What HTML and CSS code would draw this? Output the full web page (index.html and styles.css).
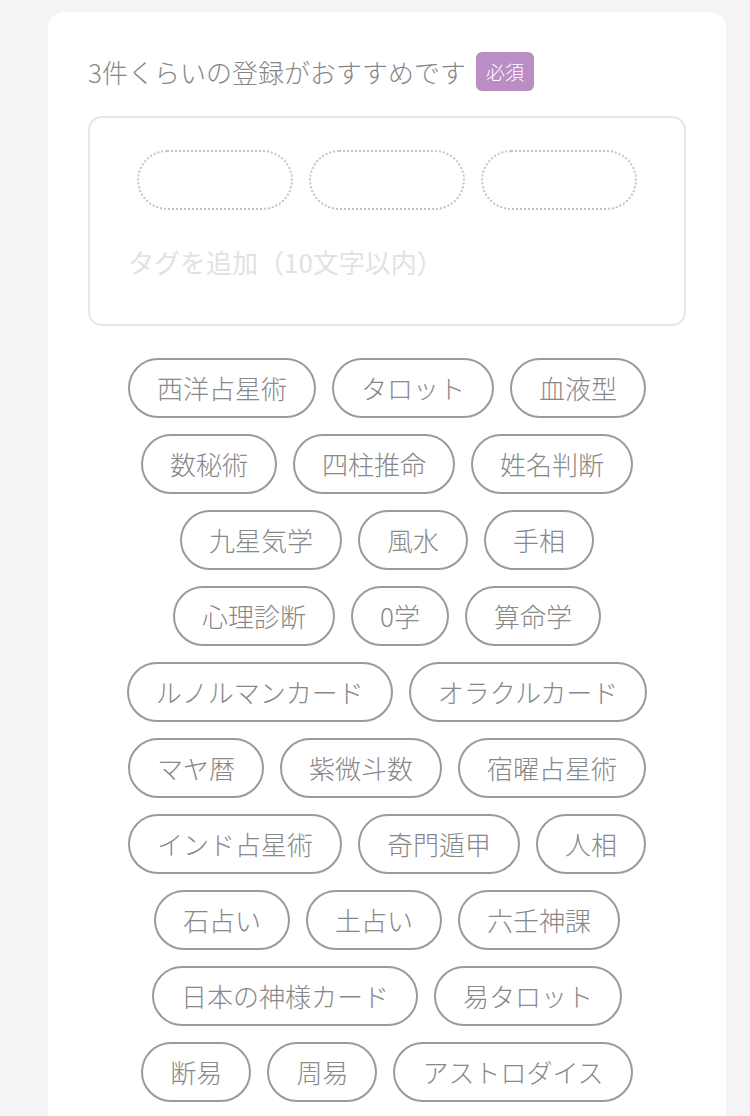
FILE: index.html
```html
<!DOCTYPE html>
<html lang="ja">
<head>
<meta charset="utf-8">
<link rel="stylesheet" href="styles.css">
</head>
<body>
<div class="card">
  <div class="label-row">
    <span class="label">3件くらいの登録がおすすめです</span>
    <span class="badge">必須</span>
  </div>
  <div class="input-box">
    <div class="slots">
      <span class="slot"></span>
      <span class="slot"></span>
      <span class="slot"></span>
    </div>
    <div class="placeholder">タグを追加（10文字以内）</div>
  </div>
  <div class="tags">
    <span class="tag">西洋占星術</span>
    <span class="tag">タロット</span>
    <span class="tag">血液型</span>
    <span class="tag">数秘術</span>
    <span class="tag">四柱推命</span>
    <span class="tag">姓名判断</span>
    <span class="tag">九星気学</span>
    <span class="tag">風水</span>
    <span class="tag">手相</span>
    <span class="tag">心理診断</span>
    <span class="tag">0学</span>
    <span class="tag">算命学</span>
    <span class="tag">ルノルマンカード</span>
    <span class="tag">オラクルカード</span>
    <span class="tag">マヤ暦</span>
    <span class="tag">紫微斗数</span>
    <span class="tag">宿曜占星術</span>
    <span class="tag">インド占星術</span>
    <span class="tag">奇門遁甲</span>
    <span class="tag">人相</span>
    <span class="tag">石占い</span>
    <span class="tag">土占い</span>
    <span class="tag">六壬神課</span>
    <span class="tag">日本の神様カード</span>
    <span class="tag">易タロット</span>
    <span class="tag">断易</span>
    <span class="tag">周易</span>
    <span class="tag">アストロダイス</span>
  </div>
</div>
</body>
</html>
```

FILE: styles.css
```css
html, body {
  margin: 0;
  padding: 0;
  background: #f4f3f6;
  overflow: hidden;
}
body {
  font-family: "Noto Sans CJK JP", "Noto Sans", sans-serif;
  font-weight: 300;
  padding: 12px 24px 0 48px;
  height: 1116px;
  box-sizing: border-box;
}
.card {
  background: #ffffff;
  border-radius: 16px;
  width: 678px;
  box-sizing: border-box;
  padding: 40px 40px 20px 40px;
  min-height: 1200px;
}
.label-row {
  display: flex;
  align-items: center;
  height: 39px;
}
.label {
  font-size: 26px;
  color: #878787;
  line-height: 39px;
}
.badge {
  margin-left: 10px;
  background: #ba8dc4;
  color: #ffffff;
  font-size: 19px;
  line-height: 39px;
  height: 39px;
  padding: 0 10px;
  border-radius: 6px;
}
.input-box {
  margin-top: 25px;
  border: 2px solid #e6e6e6;
  border-radius: 14px;
  height: 210px;
  box-sizing: border-box;
  padding: 32px 0 0 0;
}
.slots {
  display: flex;
  justify-content: center;
  gap: 16px;
}
.slot {
  width: 156px;
  height: 60px;
  box-sizing: border-box;
  border: 2px dotted #c4c4c4;
  border-radius: 30px;
}
.placeholder {
  margin-top: 30px;
  padding-left: 38px;
  font-size: 26px;
  line-height: 44px;
  color: #e2e2e2;
  font-weight: 400;
}
.tags {
  margin: 32px auto 0;
  width: 560px;
  display: flex;
  flex-wrap: wrap;
  justify-content: center;
  gap: 16px;
}
.tag {
  height: 60px;
  box-sizing: border-box;
  border: 2px solid #9a9a9a;
  border-radius: 30px;
  padding: 0 27px;
  font-size: 26px;
  line-height: 56px;
  color: #888888;
  white-space: nowrap;
}
```
